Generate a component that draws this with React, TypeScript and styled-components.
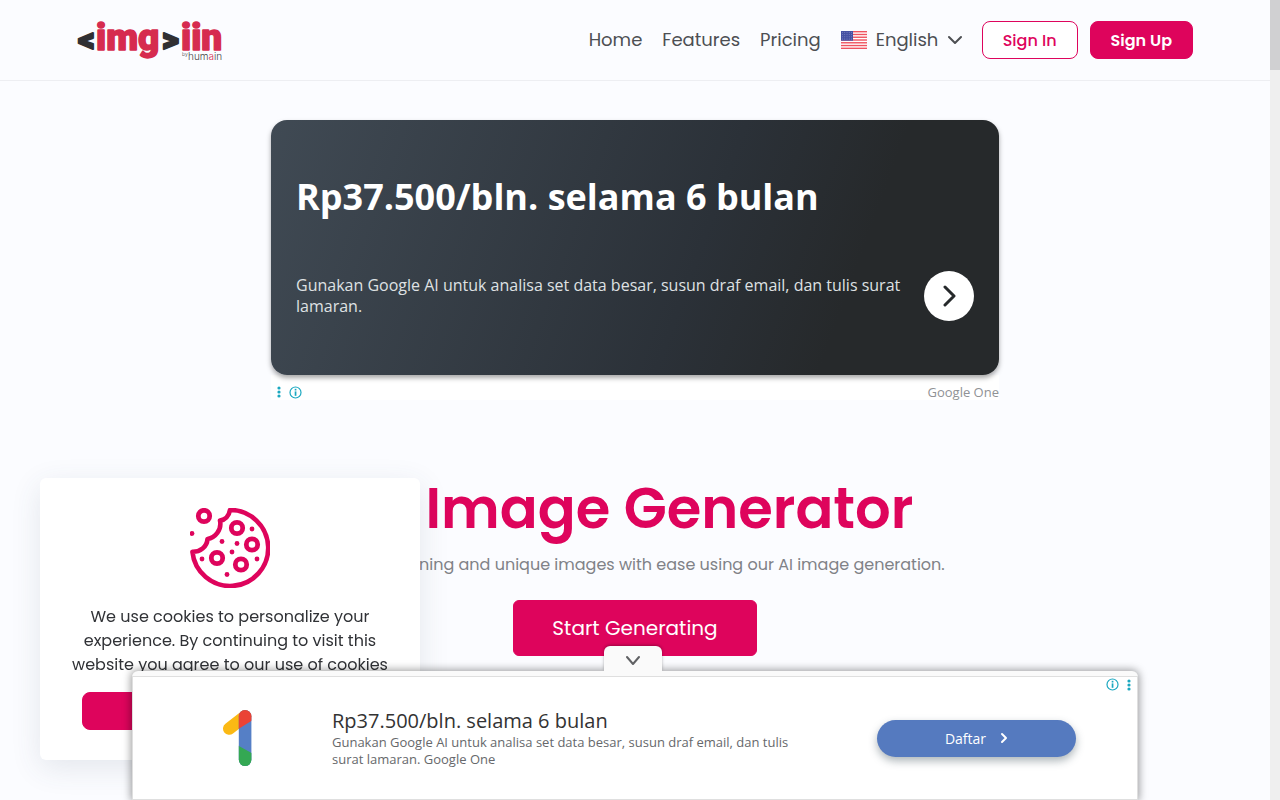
import React from "react";
import styled, { createGlobalStyle } from "styled-components";

const pink = "#de045c";
const ui = `Poppins, Inter, "Liberation Sans", sans-serif`;
const adFont = `"Open Sans", "Noto Sans", sans-serif`;

const GlobalStyle = createGlobalStyle`
  * { box-sizing: border-box; }
  body {
    margin: 0;
    background: #fbfcff;
    font-family: ${ui};
    color: #4d4f53;
    overflow: hidden;
  }
  h1, h2, p { margin: 0; }
  button, select { font-family: inherit; cursor: pointer; }
  svg { display: block; flex: none; }
`;

const Page = styled.div`
  min-height: 100vh;
  margin-right: 10px;
`;

const ScrollTrack = styled.div`
  position: fixed;
  top: 0;
  right: 0;
  bottom: 0;
  width: 10px;
  background: #efefef;
`;

const ScrollThumb = styled.div`
  height: 9%;
  max-height: 70px;
  background: #d0d0d2;
`;

const Header = styled.header`
  border-bottom: 1px solid #edeef2;
`;

const HeaderInner = styled.div`
  max-width: 1140px;
  height: 80px;
  margin: 0 auto;
  padding: 0 12px;
  display: flex;
  align-items: center;
  justify-content: space-between;
`;

const Nav = styled.nav`
  display: flex;
  align-items: center;
  gap: 20px;
`;

const NavLink = styled.a`
  font-size: 18px;
  line-height: 24px;
  color: #4d4f53;
  text-decoration: none;
`;

const Language = styled.label`
  display: flex;
  align-items: center;
  gap: 9px;
`;

const LanguageSelect = styled.select`
  appearance: none;
  border: 0;
  padding: 0;
  background: transparent;
  color: #4d4f53;
  font-size: 18px;
  line-height: 24px;
`;

const Actions = styled.div`
  display: flex;
  gap: 12px;
`;

const Button = styled.button<{ $outline?: boolean; $large?: boolean }>`
  height: ${(p) => (p.$large ? 56 : 38)}px;
  padding: 0 ${(p) => (p.$large ? 38 : 20)}px;
  border: 1px solid ${pink};
  border-radius: ${(p) => (p.$large ? 6 : 8)}px;
  background: ${(p) => (p.$outline ? "#fff" : pink)};
  color: ${(p) => (p.$outline ? pink : "#fff")};
  font-size: ${(p) => (p.$large ? 20 : 16)}px;
  font-weight: ${(p) => (p.$large ? 400 : p.$outline ? 500 : 600)};
  white-space: nowrap;
`;

const Main = styled.main`
  display: flex;
  flex-direction: column;
  align-items: center;
  padding-top: 39px;
`;

const DisplayAd = styled.section`
  width: 100%;
  max-width: 728px;
  font-family: ${adFont};
`;

const AdCard = styled.div`
  position: relative;
  padding: 53px 25px 54px;
  border-radius: 16px;
  background: linear-gradient(110deg, #404a54 0%, #2b3138 58%, #26292b 78%);
  box-shadow: 0 3px 5px rgba(0, 0, 0, 0.35);
  color: #fff;
`;

const AdTitle = styled.h2`
  font-size: 36px;
  line-height: 48px;
  font-weight: 700;
`;

const AdRow = styled.div`
  display: flex;
  align-items: center;
  justify-content: space-between;
  gap: 20px;
  margin-top: 50px;
`;

const AdText = styled.p`
  font-size: 16px;
  line-height: 21px;
  color: #dfe1e3;
`;

const RoundButton = styled.button`
  flex: none;
  width: 50px;
  height: 50px;
  padding: 0;
  border: 0;
  border-radius: 50%;
  background: #fff;
  display: grid;
  place-items: center;
`;

const AdFooter = styled.div`
  display: flex;
  align-items: center;
  justify-content: space-between;
  height: 25px;
  padding: 9px 0 0 6px;
  background: #fff;
  font-size: 13px;
  line-height: 16px;
  color: #909295;
`;

const AdMarks = styled.div`
  display: flex;
  align-items: center;
  gap: 8px;
`;

const Hero = styled.section`
  display: flex;
  flex-direction: column;
  align-items: center;
  padding: 73px 12px 0;
`;

const HeroTitle = styled.h1`
  font-size: 56px;
  line-height: 72px;
  font-weight: 600;
  color: ${pink};
`;

const HeroText = styled.p`
  margin: 8px 0 23px;
  font-size: 16px;
  line-height: 24px;
  color: #808287;
`;

const CookieCard = styled.aside`
  position: fixed;
  left: 40px;
  bottom: 40px;
  width: 380px;
  padding: 30px;
  border-radius: 6px;
  background: #fff;
  box-shadow: 0 8px 30px rgba(60, 70, 100, 0.12);
  display: flex;
  flex-direction: column;
  align-items: center;
`;

const CookieText = styled.p`
  margin: 17px 0 15px;
  font-size: 16px;
  line-height: 24px;
  text-align: center;
  color: #303236;
`;

const CookieActions = styled.div`
  display: grid;
  grid-template-columns: 1fr 1fr;
  gap: 4px;
  width: 100%;
  padding: 0 12px;
`;

const AnchorAd = styled.aside`
  position: fixed;
  bottom: 0;
  left: 0;
  right: 10px;
  max-width: 1006px;
  margin: 0 auto;
  padding-top: 5px;
  border-radius: 6px 6px 0 0;
  background: #fafafa;
  box-shadow: 0 0 8px 1px rgba(0, 0, 0, 0.4);
  font-family: ${adFont};
`;

const CollapseTab = styled.button`
  position: absolute;
  bottom: 100%;
  left: 50%;
  margin-left: -31px;
  width: 58px;
  height: 25px;
  padding: 4px 0 0;
  border: 0;
  border-radius: 6px 6px 0 0;
  background: #fafafa;
  box-shadow: 0 -1px 3px rgba(0, 0, 0, 0.3);
  clip-path: inset(-4px -4px 0 -4px);
  display: grid;
  place-items: center;
`;

const AnchorBody = styled.div`
  position: relative;
  display: grid;
  grid-template-columns: 199px 1fr 260px;
  align-items: center;
  height: 124px;
  border: 1px solid #dfdfdf;
  background: #fff;
`;

const AnchorLogo = styled.div`
  padding-left: 89px;
`;

const AnchorTitle = styled.h2`
  font-size: 20px;
  line-height: 26px;
  font-weight: 500;
  color: #333;
`;

const AnchorText = styled.p`
  max-width: 480px;
  font-size: 13px;
  line-height: 17px;
  color: #66686b;
`;

const PillButton = styled.button`
  width: 199px;
  height: 37px;
  border: 0;
  border-radius: 19px;
  background: #557abf;
  box-shadow: 0 4px 9px rgba(50, 70, 80, 0.4);
  color: #fff;
  font-family: ${adFont};
  font-size: 14px;
  display: flex;
  align-items: center;
  justify-content: center;
  gap: 14px;
`;

const CornerMarks = styled(AdMarks)`
  position: absolute;
  top: 1px;
  right: 6px;
`;

const Logo = () => (
  <svg width="148" height="54" viewBox="0 -4 148 54" role="img" aria-label="imgiin by humain">
    <g fontFamily="Roboto, sans-serif" fontWeight="900" strokeLinejoin="round">
      <g fill="#303033" stroke="#303033" fontSize="33" strokeWidth="2">
        <text x="1" y="34">&lt;</text>
        <text x="85" y="34">&gt;</text>
      </g>
      <g fill="#d62b4f" stroke="#d62b4f" fontSize="37" strokeWidth="1.4">
        <text x="19" y="33">img</text>
        <text x="104" y="33">iin</text>
      </g>
    </g>
    <g fontFamily="Inter, sans-serif" fontWeight="300" fill="#444">
      <text x="105" y="39" fontSize="5">by</text>
      <text x="111" y="43" fontSize="10">
        hum<tspan fill="#d62b4f">a</tspan>in
      </text>
    </g>
  </svg>
);

const Flag = () => (
  <svg width="26" height="18" viewBox="0 0 26 18" aria-hidden="true">
    <rect width="26" height="18" fill="#fff" />
    {[0, 1, 2, 3, 4, 5, 6].map((i) => (
      <rect key={i} y={i * 2.77} width="26" height="1.4" fill="#ef5360" />
    ))}
    <rect width="12" height="9.7" fill="#4651a3" />
    {[0, 1, 2, 3].map((r) =>
      [0, 1, 2, 3, 4].map((c) => (
        <circle key={`${r}-${c}`} cx={1.6 + c * 2.2} cy={1.4 + r * 2.2} r="0.4" fill="#b7bce0" />
      ))
    )}
  </svg>
);

const Chevron = ({ w, h, color, stroke, right }: { w: number; h: number; color: string; stroke: number; right?: boolean }) => (
  <svg width={w} height={h} viewBox={`0 0 ${w} ${h}`} aria-hidden="true">
    <polyline
      points={right ? `2,2 ${w - 2},${h / 2} 2,${h - 2}` : `1,2 ${w / 2},${h - 2} ${w - 1},2`}
      fill="none"
      stroke={color}
      strokeWidth={stroke}
      strokeLinecap="round"
      strokeLinejoin="round"
    />
  </svg>
);

const Dots = () => (
  <svg width="4" height="12" viewBox="0 0 4 12" fill="#1ba8c0" aria-hidden="true">
    <circle cx="2" cy="2" r="1.6" />
    <circle cx="2" cy="6" r="1.6" />
    <circle cx="2" cy="10" r="1.6" />
  </svg>
);

const Info = () => (
  <svg width="13" height="13" viewBox="0 0 13 13" aria-hidden="true">
    <circle cx="6.5" cy="6.5" r="5.5" fill="none" stroke="#1ba8c0" strokeWidth="1.2" />
    <rect x="5.7" y="5.4" width="1.7" height="4.4" fill="#1ba8c0" />
    <rect x="5.7" y="2.8" width="1.7" height="1.7" fill="#1ba8c0" />
  </svg>
);

const rings = [[14, 8], [47, 20], [62, 36.5], [27, 50], [51, 56.5]];
const crumbs = [[2, 25.5], [62, 21], [32, 33.5], [47, 35.5], [42, 44], [12, 51], [67, 51], [37, 66.5]];

const Cookie = () => (
  <svg width="80" height="80" viewBox="0 0 80 80" aria-hidden="true">
    <path
      d="M40 2 A38 38 0 1 1 2.4 43.8 C10 44 17 39 17.5 31 C25 30 32 22 30 12.6 C35 12 39 8 40 2 Z"
      fill="none"
      stroke={pink}
      strokeWidth="4.6"
      strokeLinejoin="round"
    />
    {rings.map(([x, y]) => (
      <circle key={`${x}-${y}`} cx={x} cy={y} r="5.7" fill="none" stroke={pink} strokeWidth="4.8" />
    ))}
    {crumbs.map(([x, y]) => (
      <circle key={`${x}-${y}`} cx={x} cy={y} r="2.4" fill={pink} />
    ))}
  </svg>
);

const GoogleOne = () => (
  <svg width="30" height="58" viewBox="0 0 30 58" role="img" aria-label="Google One">
    <clipPath id="one-bar">
      <rect x="16.8" y="1" width="12.6" height="56" rx="6.3" />
    </clipPath>
    <path d="M7.2 19.6 L23 7.3" stroke="#fbb914" strokeWidth="12.4" strokeLinecap="round" />
    <g clipPath="url(#one-bar)">
      <rect x="16" width="14" height="58" fill="#557fc6" />
      <path d="M16 0 H30 V11.4 L16 20.2 Z" fill="#ea4335" />
      <path d="M16 36.6 L30 44.2 V58 H16 Z" fill="#34a853" />
    </g>
  </svg>
);

export default function App() {
  return (
    <>
      <GlobalStyle />
      <Page>
        <Header>
          <HeaderInner>
            <Logo />
            <Nav>
              <NavLink href="#home">Home</NavLink>
              <NavLink href="#features">Features</NavLink>
              <NavLink href="#pricing">Pricing</NavLink>
              <Language>
                <Flag />
                <LanguageSelect aria-label="Language">
                  <option>English</option>
                </LanguageSelect>
                <Chevron w={14} h={10} color="#4d4f53" stroke={2} />
              </Language>
              <Actions>
                <Button $outline>Sign In</Button>
                <Button>Sign Up</Button>
              </Actions>
            </Nav>
          </HeaderInner>
        </Header>
        <Main>
          <DisplayAd>
            <AdCard>
              <AdTitle>Rp37.500/bln. selama 6 bulan</AdTitle>
              <AdRow>
                <AdText>
                  Gunakan Google AI untuk analisa set data besar, susun draf email, dan tulis surat lamaran.
                </AdText>
                <RoundButton aria-label="Open">
                  <Chevron w={13} h={22} color="#26292b" stroke={3} right />
                </RoundButton>
              </AdRow>
            </AdCard>
            <AdFooter>
              <AdMarks>
                <Dots />
                <Info />
              </AdMarks>
              <span>Google One</span>
            </AdFooter>
          </DisplayAd>
          <Hero>
            <HeroTitle>AI Image Generator</HeroTitle>
            <HeroText>Create stunning and unique images with ease using our AI image generation.</HeroText>
            <Button $large>Start Generating</Button>
          </Hero>
        </Main>
      </Page>
      <CookieCard>
        <Cookie />
        <CookieText>
          We use cookies to personalize your experience. By continuing to visit this website you agree to our use of
          cookies
        </CookieText>
        <CookieActions>
          <Button>Got it</Button>
          <Button $outline>More</Button>
        </CookieActions>
      </CookieCard>
      <AnchorAd>
        <CollapseTab aria-label="Collapse">
          <Chevron w={14} h={11} color="#606164" stroke={2} />
        </CollapseTab>
        <AnchorBody>
          <AnchorLogo>
            <GoogleOne />
          </AnchorLogo>
          <div>
            <AnchorTitle>Rp37.500/bln. selama 6 bulan</AnchorTitle>
            <AnchorText>
              Gunakan Google AI untuk analisa set data besar, susun draf email, dan tulis surat lamaran. Google One
            </AnchorText>
          </div>
          <PillButton>
            Daftar
            <Chevron w={8} h={12} color="#fff" stroke={2} right />
          </PillButton>
          <CornerMarks>
            <Info />
            <Dots />
          </CornerMarks>
        </AnchorBody>
      </AnchorAd>
      <ScrollTrack>
        <ScrollThumb />
      </ScrollTrack>
    </>
  );
}
